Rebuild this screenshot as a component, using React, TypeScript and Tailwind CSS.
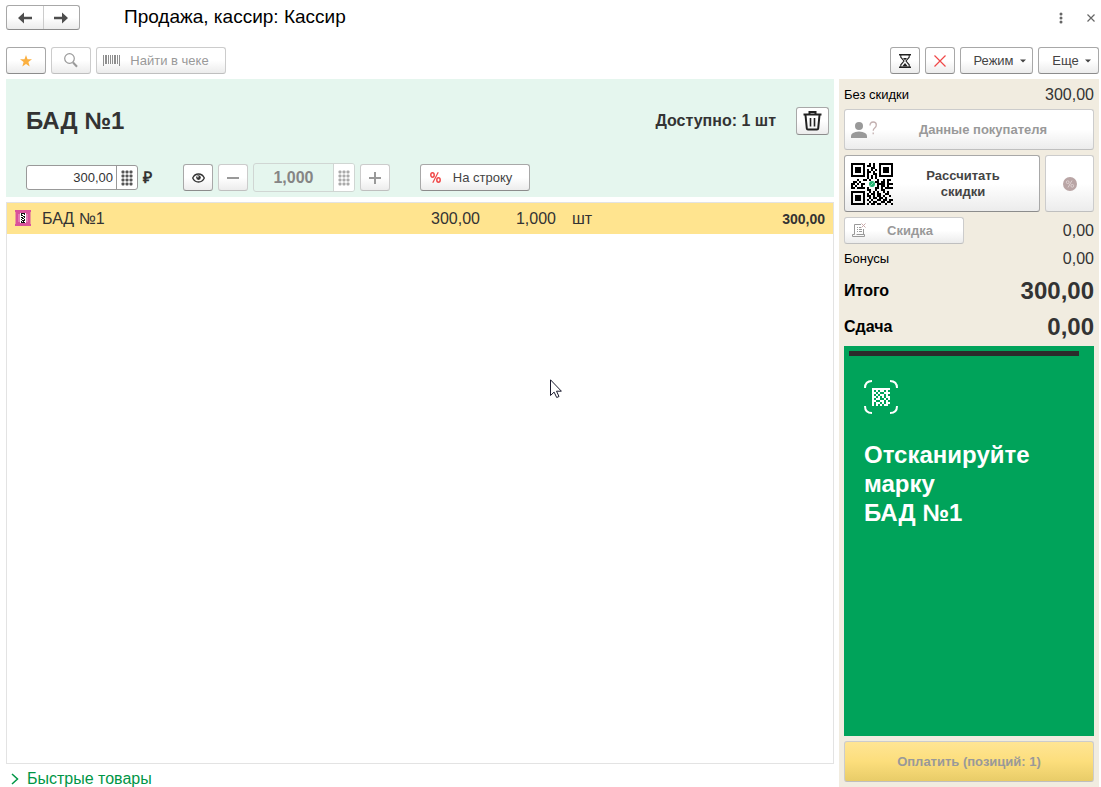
import type { ButtonHTMLAttributes } from "react";
import clsx from "clsx";

interface SaleLine {
  id: number;
  name: string;
  price: string;
  quantity: string;
  unit: string;
  total: string;
}

const lines: SaleLine[] = [
  { id: 1, name: "БАД №1", price: "300,00", quantity: "1,000", unit: "шт", total: "300,00" },
];

const QR = [
  "#######..#.#..#######",
  "#.....#.##.#..#.....#",
  "#.###.#...##..#.###.#",
  "#.###.#.#.#.#.#.###.#",
  "#.###.#.##.#..#.###.#",
  "#.....#.#..##.#.....#",
  "#######.#.#.#.#######",
  "........#.#.#........",
  "...#..##.#...#..#.##.",
  ".##.#.......##.##.#..",
  "##.#.##......####.###",
  "#.#..#.......#.##.#..",
  "##.####.#...##.#.####",
  "........##..#..##....",
  "#######..#.#.#..#.#..",
  "#.....#.#.##.##..##..",
  "#.###.#.##.#.##.#..#.",
  "#.###.#..#.##.##.#...",
  "#.###.#.#.#..##.##.##",
  "#.....#..#.##..##.##.",
  "#######.#.##.##..#..#",
];

const MATRIX = [
  "#########",
  "#.#.##.#.",
  "##.#..###",
  "#.#.##.#.",
  "##.#.#.##",
  "#.##..#.#",
  "##..##.#.",
  "#.##.#.##",
  "#.#.#.##.",
];

function Modules({ rows, size, color }: { rows: string[]; size: number; color: string }) {
  return (
    <g fill={color} shapeRendering="crispEdges">
      {rows.map((row, y) =>
        row.split("").map((cell, x) =>
          cell === "#" ? (
            <rect key={`${x}-${y}`} x={x * size} y={y * size} width={size} height={size} />
          ) : null,
        ),
      )}
    </g>
  );
}

function Button({ className, disabled, type = "button", ...props }: ButtonHTMLAttributes<HTMLButtonElement>) {
  return (
    <button
      type={type}
      disabled={disabled}
      className={clsx(
        "flex shrink-0 items-center justify-center rounded-[3px] border bg-linear-to-b from-white from-50% to-[#ececec] text-[13px]",
        disabled
          ? "border-[#cccccc] border-b-[#bfbfbf] text-[#999999]"
          : "border-[#a8a8a8] border-b-[#8c8c8c] text-[#444444]",
        className,
      )}
      {...props}
    />
  );
}

function Keypad({ color }: { color: string }) {
  return (
    <svg width="12" height="16" viewBox="0 0 12 16" fill={color}>
      {[0, 4, 8, 12].map((y) =>
        [0, 4, 8].map((x) => <rect key={`${x}-${y}`} x={x + 0.5} y={y + 0.5} width="3" height="3" rx="1" />),
      )}
    </svg>
  );
}

function Arrow({ flip }: { flip?: boolean }) {
  return (
    <svg width="14" height="12" viewBox="0 0 14 12" className={clsx(flip && "rotate-180")}>
      <path d="M0 6L6 .5V4.700h8v2.600H6v4.200z" fill="#4d4d4d" />
    </svg>
  );
}

function Caret() {
  return (
    <svg width="6" height="4" viewBox="0 0 6 4">
      <path d="M0 .5h6L3 3.500z" fill="#444444" />
    </svg>
  );
}

function Toolbar() {
  return (
    <div className="flex gap-[5px] pt-3 pr-[2px] pb-[5px] pl-1.5">
      <Button className="h-[27px] w-10" aria-label="Избранное">
        <svg width="12" height="12" viewBox="0 0 12 12">
          <path d="M6 0l1.500 4.200H12L8.400 7l1.300 4.600L6 8.900l-3.700 2.700L3.600 7 0 4.200h4.500z" fill="#fbb040" />
        </svg>
      </Button>
      <Button disabled className="h-[27px] w-10" aria-label="Поиск">
        <svg width="14" height="15" viewBox="0 0 14 15" fill="none" stroke="#999999">
          <circle cx="5.500" cy="5.500" r="4.800" strokeWidth="1.200" />
          <path d="M9 9.500l4 4.300" strokeWidth="2" />
        </svg>
      </Button>
      <Button disabled className="h-[27px] w-[130px] gap-2.5 pr-2.5">
        <svg width="17" height="11" viewBox="0 0 17 11" fill="#8f8f8f" shapeRendering="crispEdges">
          <path d="M0 0h1v11H0zM2 0h2v9H2zM5 0h1v9H5zM7 0h1v9H7zM9 0h1v9H9zM11 0h2v9h-2zM14 0h1v9h-1zM16 0h1v11h-1z" />
        </svg>
        Найти в чеке
      </Button>
      <div className="flex-1" />
      <Button className="h-[27px] w-[30px]" aria-label="Отложить">
        <svg width="12" height="14" viewBox="0 0 12 14" fill="none" stroke="#222222">
          <path d="M0 .8h12M0 13.200h12" strokeWidth="1.500" />
          <path d="M1.800 1v2.200L5 7l-3.200 3.800V13M10.200 1v2.200L7 7l3.200 3.800V13" strokeWidth="1.100" />
          <path d="M4 4h4L6 6.300zM3.200 12.500L6 9l2.800 3.500z" fill="#222222" stroke="none" />
        </svg>
      </Button>
      <Button className="h-[27px] w-[30px]" aria-label="Отменить">
        <svg width="12" height="12" viewBox="0 0 12 12" stroke="#f04848" strokeWidth="1.200">
          <path d="M.5.5l11 11M11.500.5l-11 11" />
        </svg>
      </Button>
      <Button className="h-[27px] w-[73px] gap-1.5 pl-1.5">
        Режим
        <Caret />
      </Button>
      <Button className="h-[27px] w-[61px] gap-1.5 pl-1.5">
        Еще
        <Caret />
      </Button>
    </div>
  );
}

function ItemCard() {
  return (
    <section className="bg-[#e5f6ee] pt-7 pr-[5px] pb-[5px] pl-5 text-[#333333]">
      <div className="flex h-7 items-center gap-5">
        <h2 className="flex-1 text-2xl font-bold">БАД №1</h2>
        <span className="text-base font-bold">Доступно: 1 шт</span>
        <Button className="h-7 w-[33px]" aria-label="Удалить">
          <svg width="19" height="20" viewBox="0 0 19 20" fill="none" stroke="#222222">
            <path d="M.5 3.500h18" strokeWidth="2" />
            <path d="M6.500 3V1h6v2" strokeWidth="2" />
            <path d="M2.500 4l1.300 13.500q.1 1 1.200 1h9q1.100 0 1.200-1L16.500 4" strokeWidth="2" />
            <path d="M7.500 7v8.500M11.500 7v8.500" strokeWidth="1.600" />
          </svg>
        </Button>
      </div>

      <div className="mt-7 flex h-[29px] items-center">
        <div className="flex h-[25px] w-28 rounded-[3px] border border-[#999999] bg-white">
          <input
            aria-label="Цена"
            defaultValue="300,00"
            className="w-full min-w-0 flex-1 pr-[3px] text-right text-[13px] outline-none"
          />
          <button
            type="button"
            aria-label="Ввести цену"
            className="flex w-[21px] items-center justify-center border-l border-[#999999]"
          >
            <Keypad color="#555555" />
          </button>
        </div>
        <span className="w-[45px] pl-[5px] text-base font-bold">₽</span>

        <div className="flex items-center gap-[5px]">
          <Button className="h-[27px] w-[30px]" aria-label="Показать">
            <svg width="13" height="10" viewBox="0 0 13 10" fill="none" stroke="#333333">
              <path d="M.7 5Q2.500 1 6.500 1t5.800 4Q10.500 9 6.500 9T.7 5z" strokeWidth="1.300" />
              <circle cx="6.500" cy="4.600" r="2.300" fill="#333333" stroke="none" />
              <circle cx="5.900" cy="3.800" r=".8" fill="#ffffff" stroke="none" />
            </svg>
          </Button>
          <Button disabled className="h-[27px] w-[30px]" aria-label="Меньше">
            <svg width="12" height="12" viewBox="0 0 12 12" fill="#999999">
              <path d="M0 5h12v2H0z" />
            </svg>
          </Button>
          <div className="flex h-[29px] w-[102px] rounded-[3px] border border-[#d0d6d3]">
            <input
              aria-label="Количество"
              disabled
              defaultValue="1,000"
              className="w-full min-w-0 flex-1 text-center text-base font-bold text-[#858585]"
            />
            <button
              type="button"
              disabled
              aria-label="Ввести количество"
              className="flex w-[21px] items-center justify-center rounded-r-[2px] border-l border-[#d0d6d3] bg-white"
            >
              <Keypad color="#aaaaaa" />
            </button>
          </div>
          <Button disabled className="h-[27px] w-[30px]" aria-label="Больше">
            <svg width="12" height="12" viewBox="0 0 12 12" fill="#999999">
              <path d="M0 5h5V0h2v5h5v2H7v5H5V7H0z" />
            </svg>
          </Button>
        </div>

        <Button className="ml-[30px] h-[27px] w-[110px] gap-3 pr-2">
          <svg width="11" height="11" viewBox="0 0 11 11" fill="none" stroke="#f04848" strokeWidth="1.500">
            <ellipse cx="2.500" cy="3" rx="1.700" ry="2.200" />
            <ellipse cx="8.500" cy="8" rx="1.700" ry="2.200" />
            <path d="M8.200.3L2.800 10.700" strokeWidth="1.200" />
          </svg>
          На строку
        </Button>
      </div>
    </section>
  );
}

function SaleTable() {
  return (
    <div className="mt-[5px] flex-1 border border-[#e3e3e3]">
      <table className="w-full table-fixed text-base text-[#333333]">
        <colgroup>
          <col className="w-[35px]" />
          <col />
          <col className="w-[90px]" />
          <col className="w-[76px]" />
          <col className="w-[77px]" />
          <col className="w-[200px]" />
        </colgroup>
        <tbody>
          {lines.map((line) => (
            <tr key={line.id} className="h-[31px] bg-[#ffe48f]">
              <td className="pb-0.5 pl-2">
                <svg width="16" height="16" viewBox="0 0 16 16" className="block">
                  <path
                    d="M0 0h16v2l-1 1 1 1-1 1 1 1-1 1 1 1-1 1 1 1-1 1 1 1-1 1 1 1v2H0v-2l1-1-1-1 1-1-1-1 1-1-1-1 1-1-1-1 1-1-1-1 1-1-1-1z"
                    fill="#d9529b"
                  />
                  <path d="M3 4h10v8H3z" fill="#e27bb2" />
                  <path d="M5 3h6v10H5z" fill="#ffffff" />
                  <path
                    d="M6 3h4v1H6zM6 4h1v1H6zM9 4h1v1H9zM6 5h2v1H6zM8 6h2v1H8zM6 7h2v1H6zM9 7h1v1H9zM7 8h2v1H7zM6 9h1v1H6zM9 9h1v1H9zM7 10h3v1H7zM6 11h1v1H6zM8 11h1v1H8zM6 12h4v1H6z"
                    fill="#111111"
                  />
                </svg>
              </td>
              <td>{line.name}</td>
              <td className="text-right">{line.price}</td>
              <td className="text-right">{line.quantity}</td>
              <td className="pl-4">{line.unit}</td>
              <td className="pr-2 text-right text-sm font-bold">{line.total}</td>
            </tr>
          ))}
        </tbody>
      </table>
    </div>
  );
}

function ScanPanel() {
  const progress = 96;
  return (
    <div className="mt-px flex-1 bg-[#00a35a] p-[5px] text-white">
      <div className="h-[5px] bg-[#2b2b2b]" style={{ width: `${progress}%` }} />
      <div className="px-[15px] pt-6">
        <svg width="34" height="34" viewBox="0 0 34 34">
          <path
            d="M1 8Q1 1 8 1M26 1q7 0 7 7M33 26q0 7-7 7M8 33q-7 0-7-7"
            fill="none"
            stroke="#ffffff"
            strokeWidth="2"
          />
          <g transform="translate(8 8)">
            <Modules rows={MATRIX} size={2} color="#ffffff" />
          </g>
        </svg>
        <p className="mt-[26px] text-2xl leading-[29px] font-bold">
          Отсканируйте марку
          <br />
          БАД №1
        </p>
      </div>
    </div>
  );
}

function Summary() {
  return (
    <aside className="flex w-[260px] shrink-0 flex-col bg-[#f1ece0] px-[5px] pb-[5px] text-[13px] text-black">
      <div className="flex h-[30px] items-center justify-between pt-0.5">
        <span>Без скидки</span>
        <span className="text-base text-[#333333]">300,00</span>
      </div>
      <Button disabled className="h-[41px] px-1.5 font-bold">
        <svg width="28" height="18" viewBox="0 0 28 18">
          <circle cx="8" cy="5" r="4" fill="#999999" />
          <path d="M0 17v-2q0-4 8-4.500 8 .5 8 4.500v2z" fill="#999999" />
          <path
            d="M19 4.500Q19 1 22.200 1q3.100 0 3.100 3 0 1.800-1.600 3-1.500 1.100-1.500 2.800M22.200 11.500v1.700"
            fill="none"
            stroke="#c3b0b0"
            strokeWidth="1.300"
          />
        </svg>
        <span className="flex-1">Данные покупателя</span>
      </Button>
      <div className="mt-[5px] flex gap-[5px]">
        <Button className="h-[57px] flex-1 px-1.5 font-bold">
          <svg width="42" height="42" viewBox="0 0 42 42">
            <Modules rows={QR} size={2} color="#000000" />
            <circle cx="21" cy="21" r="3" fill="#23b573" />
            <path d="M19.500 22.500l3-3" stroke="#8fe0b8" />
          </svg>
          <span className="flex-1 px-4 leading-4">Рассчитать скидки</span>
        </Button>
        <Button disabled className="h-[57px] w-[49px]" aria-label="Процент скидки">
          <svg width="14" height="14" viewBox="0 0 14 14" fill="none" stroke="#ddd0d0">
            <circle cx="7" cy="7" r="7" fill="#b9a5a5" stroke="none" />
            <circle cx="4.700" cy="5.200" r="1.400" />
            <circle cx="9.300" cy="8.800" r="1.400" />
            <path d="M9 3.500l-4 7" />
          </svg>
        </Button>
      </div>
      <div className="mt-[5px] flex items-center justify-between">
        <Button disabled className="h-[27px] w-[120px] px-[7px] font-bold">
          <svg width="16" height="15" viewBox="0 0 16 15" fill="none" stroke="#999999">
            <path d="M9 1.500H2.500v10M2.500 11.500H.5v2h12v-2h-8M11.500 6v5.500" />
            <path d="M5 4.500h1M7 4.500h2M5 6.500h1M7 6.500h3M5 8.500h1M7 8.500h3" />
            <path d="M9.500.5l4 4M13.500.5l-4 4" stroke="#c9a9a9" />
          </svg>
          <span className="flex-1 pr-1">Скидка</span>
        </Button>
        <span className="text-base text-[#333333]">0,00</span>
      </div>
      <div className="flex h-[29px] items-center justify-between">
        <span>Бонусы</span>
        <span className="text-base text-[#333333]">0,00</span>
      </div>
      <div className="flex h-9 items-center justify-between font-bold">
        <span className="text-base">Итого</span>
        <span className="text-2xl text-[#333333]">300,00</span>
      </div>
      <div className="flex h-9 items-center justify-between font-bold">
        <span className="text-base">Сдача</span>
        <span className="text-2xl text-[#333333]">0,00</span>
      </div>
      <ScanPanel />
      <button
        type="button"
        disabled
        className="mt-[5px] h-[41px] rounded-[3px] border border-[#cccccc] border-b-[#bfbfbf] bg-linear-to-b from-[#ffe594] via-[#fcde7c] to-[#e8cc68] font-bold text-[#999999]"
      >
        Оплатить (позиций: 1)
      </button>
    </aside>
  );
}

export default function App() {
  return (
    <div className="relative flex min-h-screen flex-col bg-white font-['Liberation_Sans',Arial,sans-serif]">
      <header className="flex h-[35px] items-center pl-1.5">
        <div className="flex h-[25px] w-[74px] rounded-[3px] border border-[#a8a8a8] border-b-[#8c8c8c] bg-linear-to-b from-white from-50% to-[#ececec]">
          <button type="button" aria-label="Назад" className="flex flex-1 items-center justify-center">
            <Arrow />
          </button>
          <button
            type="button"
            aria-label="Вперед"
            className="flex flex-1 items-center justify-center border-l border-[#cccccc]"
          >
            <Arrow flip />
          </button>
        </div>
        <h1 className="ml-11 flex-1 text-[19px] text-black">Продажа, кассир: Кассир</h1>
        <button type="button" aria-label="Меню" className="flex w-5 justify-center">
          <svg width="4" height="12" viewBox="0 0 4 12" fill="#666666">
            <circle cx="2" cy="2" r="1.500" />
            <circle cx="2" cy="6" r="1.500" />
            <circle cx="2" cy="10" r="1.500" />
          </svg>
        </button>
        <button type="button" aria-label="Закрыть" className="ml-2.5 flex w-5 justify-center">
          <svg width="8" height="8" viewBox="0 0 8 8" stroke="#666666" strokeWidth="1.200">
            <path d="M.5.5l7 7M7.500.5l-7 7" />
          </svg>
        </button>
      </header>

      <Toolbar />

      <div className="flex flex-1 gap-[5px] pr-[2px] pl-1.5">
        <main className="flex min-w-0 flex-1 flex-col">
          <ItemCard />
          <SaleTable />
          <button type="button" className="flex h-[23px] items-center gap-2 pt-1.5 pl-[5px] text-base text-[#009646]">
            <svg width="8" height="12" viewBox="0 0 8 12" fill="none" stroke="#009646" strokeWidth="1.500">
              <path d="M1 1l5.500 5L1 11" />
            </svg>
            Быстрые товары
          </button>
        </main>
        <Summary />
      </div>

      {/* mouse pointer */}
      <svg width="12" height="20" viewBox="0 0 12 20" className="pointer-events-none absolute top-[379px] left-[550px]">
        <path
          d="M.5.8v15.700l3.600-3.400 2.600 5.400 2.300-1-2.500-5.300h4.900z"
          fill="#ffffff"
          stroke="#1a1a2e"
        />
      </svg>
    </div>
  );
}
